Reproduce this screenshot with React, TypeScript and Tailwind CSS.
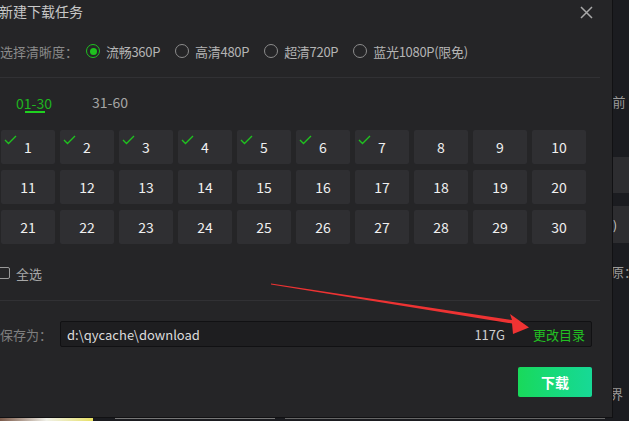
import React from "react";

const font = { fontFamily: '"Noto Sans CJK SC", "Microsoft YaHei", sans-serif' };

function Check() {
  return (
    <svg className="absolute left-[3px] top-[5px]" width="13" height="10" viewBox="0 0 13 10">
      <polyline points="1,5 4.5,8.5 12,1" fill="none" stroke="#1fc21f" strokeWidth="1.4" />
    </svg>
  );
}

function Radio({ on, label }: { on?: boolean; label: string }) {
  return (
    <div className="flex items-center gap-[6px]">
      {on ? (
        <div className="w-[14px] h-[14px] rounded-full border-[1.5px] border-[#1fc21f] flex items-center justify-center">
          <div className="w-[7px] h-[7px] rounded-full bg-[#1fc21f]" />
        </div>
      ) : (
        <div className="w-[14px] h-[14px] rounded-full border-[1.5px] border-[#8c8c8c]" />
      )}
      <span className="text-[13px] text-[#b4b4b4] leading-none tracking-[-0.3px]">{label}</span>
    </div>
  );
}

export default function App() {
  const checked = [1, 2, 3, 4, 5, 6, 7];
  const nums = Array.from({ length: 30 }, (_, i) => i + 1);
  return (
    <div className="w-[629px] h-[421px] overflow-hidden bg-[#1b1c20] flex flex-col" style={font}>
      <div className="flex h-[418px] shrink-0">
        {/* Dialog */}
        <div className="relative w-[613px] h-[418px] shrink-0 bg-[#252527] border-r border-b border-[#111113] flex flex-col">
          {/* Title */}
          <div className="h-[22px] flex items-center justify-between pr-[19px]">
            <span className="text-[14px] text-[#c8c8c8] -ml-[1px] leading-none">新建下载任务</span>
            <svg width="13" height="13" viewBox="0 0 13 13" className="mt-[2px]">
              <path d="M1 1 L12 12 M12 1 L1 12" stroke="#a8a8a8" strokeWidth="1.5" />
            </svg>
          </div>
          {/* Resolution row */}
          <div className="mt-[20px] h-[18px] flex items-center">
            <span className="text-[13px] text-[#8a8a8a] leading-none w-[86px] shrink-0">选择清晰度：</span>
            <div className="flex items-center gap-[15px]">
              <Radio on label="流畅360P" />
              <Radio label="高清480P" />
              <Radio label="超清720P" />
              <Radio label="蓝光1080P(限免)" />
            </div>
          </div>
          <div className="mt-[17px] h-px w-[600px] bg-[#313134]" />
          {/* Tabs */}
          <div className="mt-[14px] h-[20px] flex items-center">
            <div className="relative ml-[16px] w-[38px]">
              <span className="text-[14px] text-[#1fb51f] leading-none">01-30</span>
              <div className="absolute left-[9px] top-[21px] w-[20px] h-[2px] bg-[#1fd11f]" />
            </div>
            <span className="ml-[38px] text-[14px] text-[#a5a5a5] leading-none">31-60</span>
          </div>
          {/* Grid */}
          <div className="mt-[18px] ml-[1px] grid grid-cols-[repeat(10,54px)] gap-x-[5px] gap-y-[6px]">
            {nums.map((n) => (
              <div
                key={n}
                className="relative h-[34px] rounded-[2px] bg-[#2f2f32] flex items-center justify-center pt-[1px] text-[14px] text-[#f0f0f0]"
              >
                {checked.includes(n) && <Check />}
                {n}
              </div>
            ))}
          </div>
          {/* Select all */}
          <div className="mt-[20px] h-[18px] flex items-center -ml-[2px]">
            <div className="w-[12px] h-[12px] border border-[#9a9a9a] rounded-[2px]" />
            <span className="ml-[6px] text-[13px] text-[#a8a8a8] leading-none">全选</span>
          </div>
          <div className="mt-[18px] h-px w-[600px] bg-[#313134]" />
          {/* Save path */}
          <div className="mt-[20px] flex items-center">
            <span className="text-[13px] text-[#7f7f7f] leading-none w-[60px] shrink-0">保存为：</span>
            <div className="w-[532px] h-[26px] bg-[#1e1e20] border border-[#111113] rounded-[2px] flex items-center pl-[6px] pr-[6px]">
              <span className="text-[13px] text-[#dcdcdc] leading-none flex-1">d:\qycache\download</span>
              <span className="text-[13px] text-[#cfcfcf] leading-none">117G</span>
              <span className="ml-[28px] text-[13px] text-[#22c022] leading-none">更改目录</span>
            </div>
          </div>
          {/* Button */}
          <div className="mt-[20px] flex justify-end pr-[20px]">
            <button className="w-[74px] h-[30px] rounded-[2px] bg-gradient-to-r from-[#19d95a] to-[#17d996] text-white text-[14px] font-bold leading-none">
              下载
            </button>
          </div>
          {/* Red annotation arrow */}
          <svg className="absolute left-0 top-0 pointer-events-none" width="613" height="418" viewBox="0 0 613 418">
            <polygon points="271,283.5 512,320 510,314 529,327.5 513,334 512,323.5 271,284.5" fill="#ee3333" />
          </svg>
        </div>
        {/* Background app right strip */}
        <div className="flex-1 flex flex-col overflow-hidden">
          <div className="mt-[95px] h-[16px] -ml-[4px] text-[13px] text-[#9a9a9a] leading-none whitespace-nowrap">:前</div>
          <div className="mt-[46px] h-[36px] bg-[#2d2d30]" />
          <div className="mt-[13px] h-[37px] bg-[#2d2d30] flex items-center text-[12px] text-[#cfcfcf] whitespace-nowrap">)</div>
          <div className="mt-[22px] h-[16px] -ml-[2px] text-[13px] text-[#9a9a9a] leading-none whitespace-nowrap">原：</div>
          <div className="mt-[106px] h-[16px] -ml-[3px] text-[13px] text-[#9a9a9a] leading-none whitespace-nowrap">界</div>
        </div>
      </div>
      {/* Background bottom strip */}
      <div className="flex h-[3px] items-start overflow-hidden">
        <div className="w-[93px] h-full bg-gradient-to-r from-[#7a5a4a] via-[#f0f0e8] to-[#e8e060]" />
        <div className="ml-[22px] w-[160px] h-[1px] bg-[#777]" />
        <div className="ml-[10px] w-[320px] h-[1px] bg-[#666]" />
      </div>
    </div>
  );
}
